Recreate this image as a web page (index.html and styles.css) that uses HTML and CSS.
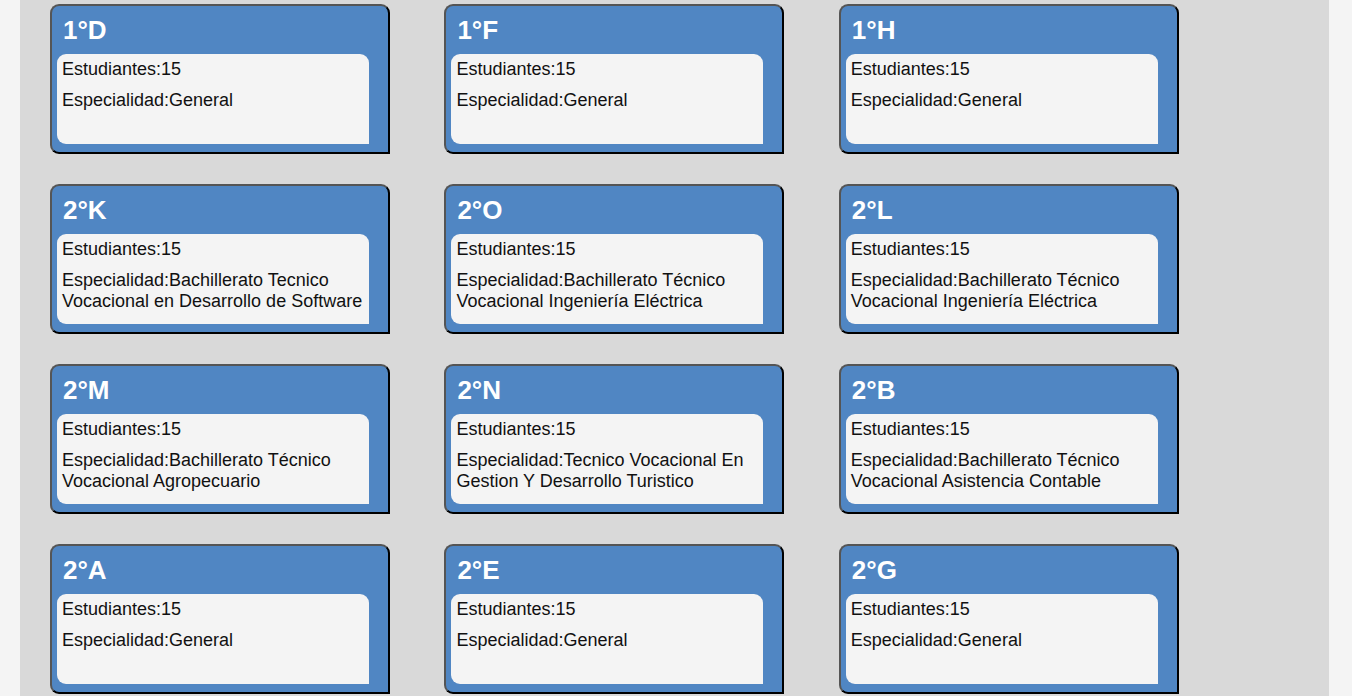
FILE: index.html
```html
<!DOCTYPE html>
<html lang="es">
<head>
<meta charset="utf-8">
<title>Cursos</title>
<link rel="stylesheet" href="styles.css">
</head>
<body>
<main class="main">
  <div class="grid">
    <div class="card"><h2 class="title">1°D</h2><div class="info"><p>Estudiantes:15</p><p>Especialidad:General</p></div></div>
    <div class="card"><h2 class="title">1°F</h2><div class="info"><p>Estudiantes:15</p><p>Especialidad:General</p></div></div>
    <div class="card"><h2 class="title">1°H</h2><div class="info"><p>Estudiantes:15</p><p>Especialidad:General</p></div></div>

    <div class="card"><h2 class="title">2°K</h2><div class="info"><p>Estudiantes:15</p><p>Especialidad:Bachillerato Tecnico Vocacional en Desarrollo de Software</p></div></div>
    <div class="card"><h2 class="title">2°O</h2><div class="info"><p>Estudiantes:15</p><p>Especialidad:Bachillerato Técnico Vocacional Ingeniería Eléctrica</p></div></div>
    <div class="card"><h2 class="title">2°L</h2><div class="info"><p>Estudiantes:15</p><p>Especialidad:Bachillerato Técnico Vocacional Ingeniería Eléctrica</p></div></div>

    <div class="card"><h2 class="title">2°M</h2><div class="info"><p>Estudiantes:15</p><p>Especialidad:Bachillerato Técnico Vocacional Agropecuario</p></div></div>
    <div class="card"><h2 class="title">2°N</h2><div class="info"><p>Estudiantes:15</p><p>Especialidad:Tecnico Vocacional En Gestion Y Desarrollo Turistico</p></div></div>
    <div class="card"><h2 class="title">2°B</h2><div class="info"><p>Estudiantes:15</p><p>Especialidad:Bachillerato Técnico Vocacional Asistencia Contable</p></div></div>

    <div class="card"><h2 class="title">2°A</h2><div class="info"><p>Estudiantes:15</p><p>Especialidad:General</p></div></div>
    <div class="card"><h2 class="title">2°E</h2><div class="info"><p>Estudiantes:15</p><p>Especialidad:General</p></div></div>
    <div class="card"><h2 class="title">2°G</h2><div class="info"><p>Estudiantes:15</p><p>Especialidad:General</p></div></div>
  </div>
</main>
</body>
</html>
```
FILE: styles.css
```css
html, body {
  margin: 0;
  padding: 0;
}
body {
  background: #f4f4f4;
  font-family: "Liberation Sans", Arial, sans-serif;
  overflow: hidden;
}
.main {
  margin-left: 20px;
  width: 1309px;
  min-height: 696px;
  background: #d9d9d9;
  box-sizing: border-box;
  padding: 4px 0 0 30px;
}
.grid {
  display: grid;
  grid-template-columns: repeat(3, 340px);
  column-gap: 54.4px;
  row-gap: 30px;
}
.card {
  box-sizing: border-box;
  width: 340px;
  height: 150px;
  background: #5086c3;
  border: 2px solid #555;
  border-right-color: #000;
  border-bottom-color: #000;
  border-radius: 9px 9px 0 9px;
  padding: 0 19px 8px 5px;
  display: flex;
  flex-direction: column;
}
.title {
  margin: 0;
  height: 48px;
  padding: 10px 0 0 6px;
  box-sizing: border-box;
  font-size: 26px;
  line-height: 28px;
  font-weight: bold;
  color: #fff;
}
.info {
  flex: 1;
  background: #f4f4f4;
  border-radius: 9px 9px 0 9px;
  padding: 5px 5px 0 5px;
  font-size: 18px;
  line-height: 21px;
  color: #111;
}
.info p {
  margin: 0 0 10px 0;
}
```
